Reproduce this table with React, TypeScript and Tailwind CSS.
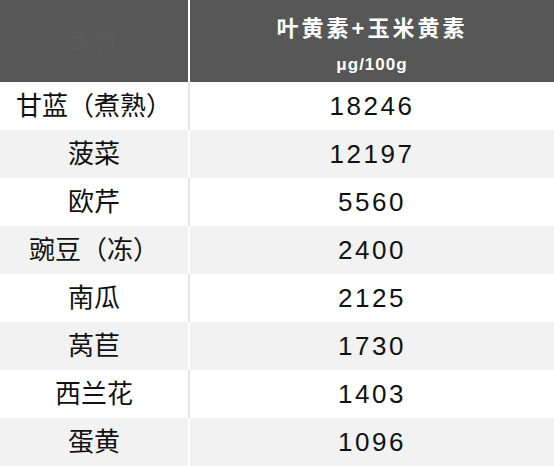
const rows: [string, string][] = [
  ["甘蓝（煮熟）", "18246"],
  ["菠菜", "12197"],
  ["欧芹", "5560"],
  ["豌豆（冻）", "2400"],
  ["南瓜", "2125"],
  ["莴苣", "1730"],
  ["西兰花", "1403"],
  ["蛋黄", "1096"],
];

export default function App() {
  return (
    <div
      className="w-[554px] h-[466px] bg-white overflow-hidden"
      style={{ fontFamily: '"Liberation Sans", "Noto Sans CJK SC", sans-serif' }}
    >
      {/* header */}
      <div className="flex h-[82px] bg-[#575757] text-white">
        <div className="w-[188px] flex items-center justify-center text-[22px] font-bold text-[#5a5a5a] tracking-[3px]">
          食物
        </div>
        <div className="w-[2px] bg-white" />
        <div className="flex-1 flex flex-col items-center pt-[15px]">
          <div className="text-[22px] font-bold tracking-[3px] leading-[28px]">
            叶黄素+玉米黄素
          </div>
          <div className="text-[17px] font-bold tracking-[1px] leading-[20px] mt-[12px]">
            μg/100g
          </div>
        </div>
      </div>

      {rows.map(([name, value], i) => {
        const odd = i % 2 === 1;
        return (
          <div
            key={name}
            className={`flex h-[48px] text-[#111] ${odd ? "bg-[#f2f2f2]" : "bg-white"}`}
          >
            <div className="w-[188px] flex items-center justify-center text-[26px] tracking-[0px]">
              {name}
            </div>
            <div className={`w-[2px] ${odd ? "bg-white" : "bg-[#e4e4e4]"}`} />
            <div className="flex-1 flex items-center justify-center text-[26px] tracking-[2.5px]">
              {value}
            </div>
          </div>
        );
      })}
    </div>
  );
}
